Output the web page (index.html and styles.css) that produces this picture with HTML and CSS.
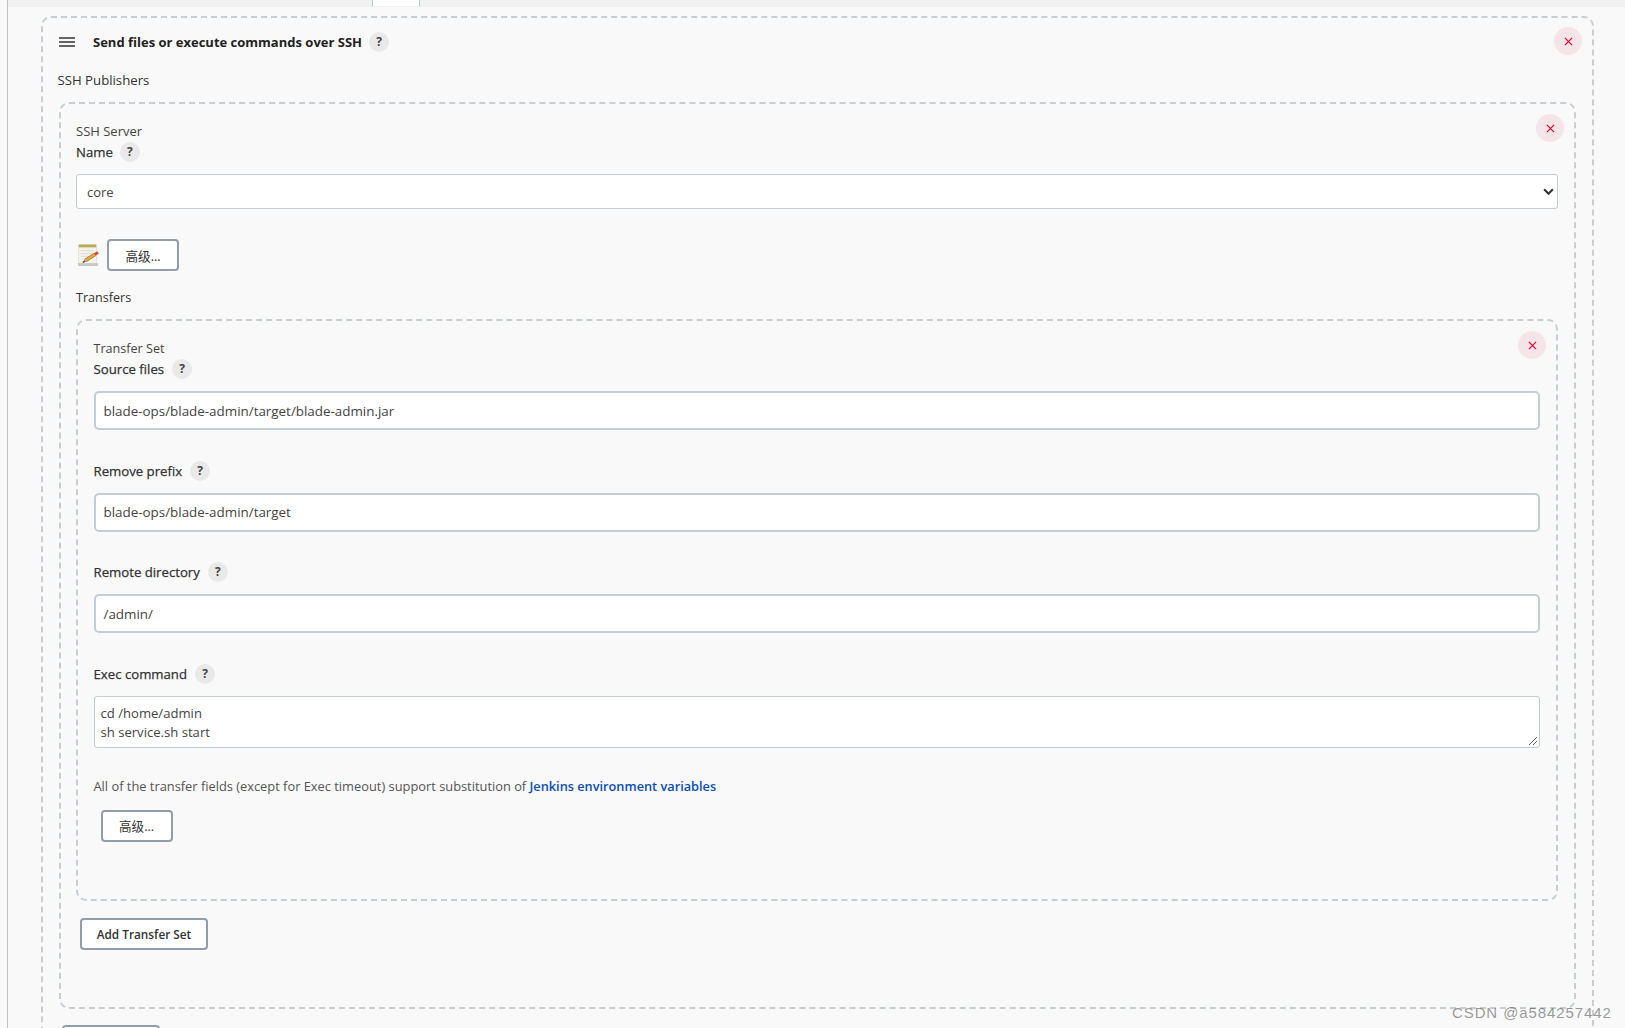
FILE: index.html
```html
<!DOCTYPE html>
<html lang="en">
<head>
<meta charset="utf-8">
<title>Send files or execute commands over SSH</title>
<link rel="stylesheet" href="styles.css">
</head>
<body>
<div class="page">
  <div class="topbar"><div class="tab"></div></div>
  <section class="chunk outer">
    <button class="del" aria-label="Delete"><svg viewBox="0 0 10 10" width="9" height="9"><path d="M1 1l8 8M9 1l-8 8"/></svg></button>
    <div class="chunk-head">
      <svg class="grip" viewBox="0 0 16 10" width="16" height="10"><path d="M0 1h16M0 5h16M0 9h16"/></svg>
      <strong class="title">Send files or execute commands over SSH</strong>
      <span class="help">?</span>
    </div>
    <div class="label publishers">SSH Publishers</div>
    <section class="chunk server">
      <button class="del" aria-label="Delete"><svg viewBox="0 0 10 10" width="9" height="9"><path d="M1 1l8 8M9 1l-8 8"/></svg></button>
      <div class="caption">SSH Server</div>
      <div class="field-label"><span>Name</span><span class="help">?</span></div>
      <div class="select-box">
        <span>core</span>
        <svg viewBox="0 0 12 8" width="11" height="7"><path d="M1 1.500l5 5 5-5"/></svg>
      </div>
      <div class="adv-row">
        <svg class="note" viewBox="0 0 24 24" width="23" height="23">
          <rect x="1.500" y="1" width="19" height="20" fill="#f3f2ed" stroke="#d4d4ce" stroke-width="0.600"/>
          <rect x="2" y="0.500" width="18" height="3" fill="#bda955"/>
          <rect x="1" y="20" width="21" height="3" fill="#c8c8c4"/>
          <path d="M4 7h13M4 10h13M4 13h8" stroke="#dcdcd6" fill="none"/>
          <path d="M8.500 17.500l10-6.500" stroke="#8a6a2a" stroke-width="3.600" fill="none"/>
          <path d="M8.500 17.500l10-6.500" stroke="#e8ac3c" stroke-width="2.400" fill="none"/>
          <path d="M18.500 11l3.500-2.300" stroke="#cf4a38" stroke-width="3" fill="none"/>
          <path d="M6 19.500l2.500-2" stroke="#555" stroke-width="1.600" fill="none"/>
        </svg>
        <button class="btn adv">高级...</button>
      </div>
      <div class="label transfers">Transfers</div>
      <section class="chunk transfer">
        <button class="del" aria-label="Delete"><svg viewBox="0 0 10 10" width="9" height="9"><path d="M1 1l8 8M9 1l-8 8"/></svg></button>
        <div class="caption">Transfer Set</div>
        <div class="field-label"><span>Source files</span><span class="help">?</span></div>
        <div class="text-box">blade-ops/blade-admin/target/blade-admin.jar</div>
        <div class="field-label spaced"><span>Remove prefix</span><span class="help">?</span></div>
        <div class="text-box">blade-ops/blade-admin/target</div>
        <div class="field-label spaced"><span>Remote directory</span><span class="help">?</span></div>
        <div class="text-box">/admin/</div>
        <div class="field-label spaced"><span>Exec command</span><span class="help">?</span></div>
        <div class="text-area">cd /home/admin<br>sh service.sh start
          <svg class="resize" viewBox="0 0 10 10" width="10" height="10"><path d="M1 9l8-8M5 9l4-4"/></svg>
        </div>
        <p class="note-text">All of the transfer fields (except for Exec timeout) support substitution of <a href="#">Jenkins environment variables</a></p>
        <button class="btn adv inner-adv">高级...</button>
      </section>
      <button class="btn add-set">Add Transfer Set</button>
    </section>
    <button class="btn add-server"></button>
  </section>
</div>
<div class="watermark">CSDN @a584257442</div>
</body>
</html>
```

FILE: styles.css
```css
* { box-sizing: border-box; }
html, body { margin: 0; height: 1028px; overflow: hidden; }
body {
  background: #f9f9f9;
  color: #333;
  font-family: "Open Sans", "Noto Sans", "Noto Sans CJK SC", sans-serif;
  font-size: 13px;
}
.page {
  height: 1028px;
  margin-left: 7px;
  border-left: 1px solid #b9c5cc;
  overflow: hidden;
}
.topbar { height: 7px; background: #f1f1f1; }
.tab {
  width: 48px;
  height: 6px;
  margin-left: 364px;
  background: #fff;
  border-left: 1px solid #b9c5cc;
  border-right: 1px solid #b9c5cc;
}
.chunk {
  position: relative;
  border: 2px dashed #c5ced3;
  border-radius: 10px;
}
.outer {
  width: 1553px;
  height: 1060px;
  margin: 9px 0 0 33px;
  padding: 0 16px;
}
.server { height: 907px; padding: 0 16px 0 15px; }
.transfer { height: 582px; padding: 0 16px 0 15.500px; }
.del {
  position: absolute;
  top: 10px;
  right: 10px;
  width: 28px;
  height: 28px;
  padding: 0;
  display: flex;
  align-items: center;
  justify-content: center;
  border: 0;
  border-radius: 50%;
  background: #f6e5e8;
}
.outer > .del { top: 9px; }
.server > .del { top: 10px; }
.del path { stroke: #e6002e; stroke-width: 1.300; fill: none; }
.chunk-head { display: flex; align-items: center; height: 46px; padding-top: 2px; }
.grip { margin-right: 18px; flex: none; }
.grip path { stroke: #333; stroke-width: 1.300; fill: none; }
.title { font-weight: 700; font-size: 13px; color: #222; }
.help {
  display: inline-flex;
  align-items: center;
  justify-content: center;
  width: 20px;
  height: 20px;
  margin-left: 7px;
  border-radius: 50%;
  background: #e9e9e9;
  font-size: 12px;
  font-weight: 700;
  color: #444;
  line-height: 1;
  -webkit-text-stroke: 0;
}
.transfer .help { margin-left: 8px; }
.label, .caption { line-height: 20px; }
.publishers { margin: 6px 0 12px -1.500px; font-size: 13.200px; }
.caption { margin-top: 17px; color: #444; }
.transfer > .caption { margin-top: 18px; margin-bottom: -1px; font-size: 12.600px; }
.field-label {
  display: flex;
  align-items: center;
  height: 22px;
  font-size: 13.200px;
  -webkit-text-stroke: 0.250px #333;
  color: #333;
}
.select-box {
  display: flex;
  align-items: center;
  justify-content: space-between;
  height: 35px;
  margin-top: 11px;
  padding: 0 3px 0 10px;
  background: #fff;
  border: 1px solid #c2ccd3;
  border-radius: 3px;
  color: #444;
}
.select-box path { stroke: #333; stroke-width: 2.400; fill: none; }
.adv-row { display: flex; align-items: center; gap: 7px; margin-top: 30px; padding-left: 1px; }
.note { flex: none; }
.btn {
  display: block;
  background: #fff;
  border: 2px solid #8f9ea9;
  border-radius: 4px;
  font-family: inherit;
  font-size: 11.800px;
  font-weight: 600;
  color: #333;
  padding: 0;
}
.adv { width: 72px; height: 32px; font-weight: 400; font-size: 12.600px; }
.transfers { margin-top: 17px; font-size: 12.600px; }
.transfer { margin-top: 11px; }
.text-box {
  display: flex;
  align-items: center;
  height: 39px;
  margin-top: 11px;
  padding: 0 8px;
  background: #fff;
  border: 2px solid #c2ced3;
  border-radius: 5px;
  font-size: 13.400px;
  color: #444;
}
.spaced { margin-top: 29.500px; }
.text-area {
  position: relative;
  height: 52px;
  margin-top: 11px;
  padding: 7px 6px;
  background: #fff;
  border: 1px solid #c2ccd3;
  border-radius: 3px;
  font-size: 13.100px;
  line-height: 19px;
  color: #444;
}
.resize { position: absolute; right: 1px; bottom: 1px; }
.resize path { stroke: #666; stroke-width: 1; fill: none; }
.note-text { margin: 28px 0 0; font-size: 12.850px; line-height: 20px; color: #555; }
.note-text a { color: #0b4fb4; text-decoration: none; font-weight: 600; font-size: 12.750px; }
.inner-adv { margin: 14px 0 0 7px; }
.add-set { width: 128px; height: 32px; margin: 17px 0 0 4px; }
.add-server { width: 98px; height: 32px; margin: 16px 0 0 3px; }
.watermark {
  position: absolute;
  left: 1452px;
  top: 1004px;
  font-family: "Liberation Sans", sans-serif;
  font-size: 15px;
  letter-spacing: 0.900px;
  color: rgba(70, 70, 70, 0.550);
}
```
